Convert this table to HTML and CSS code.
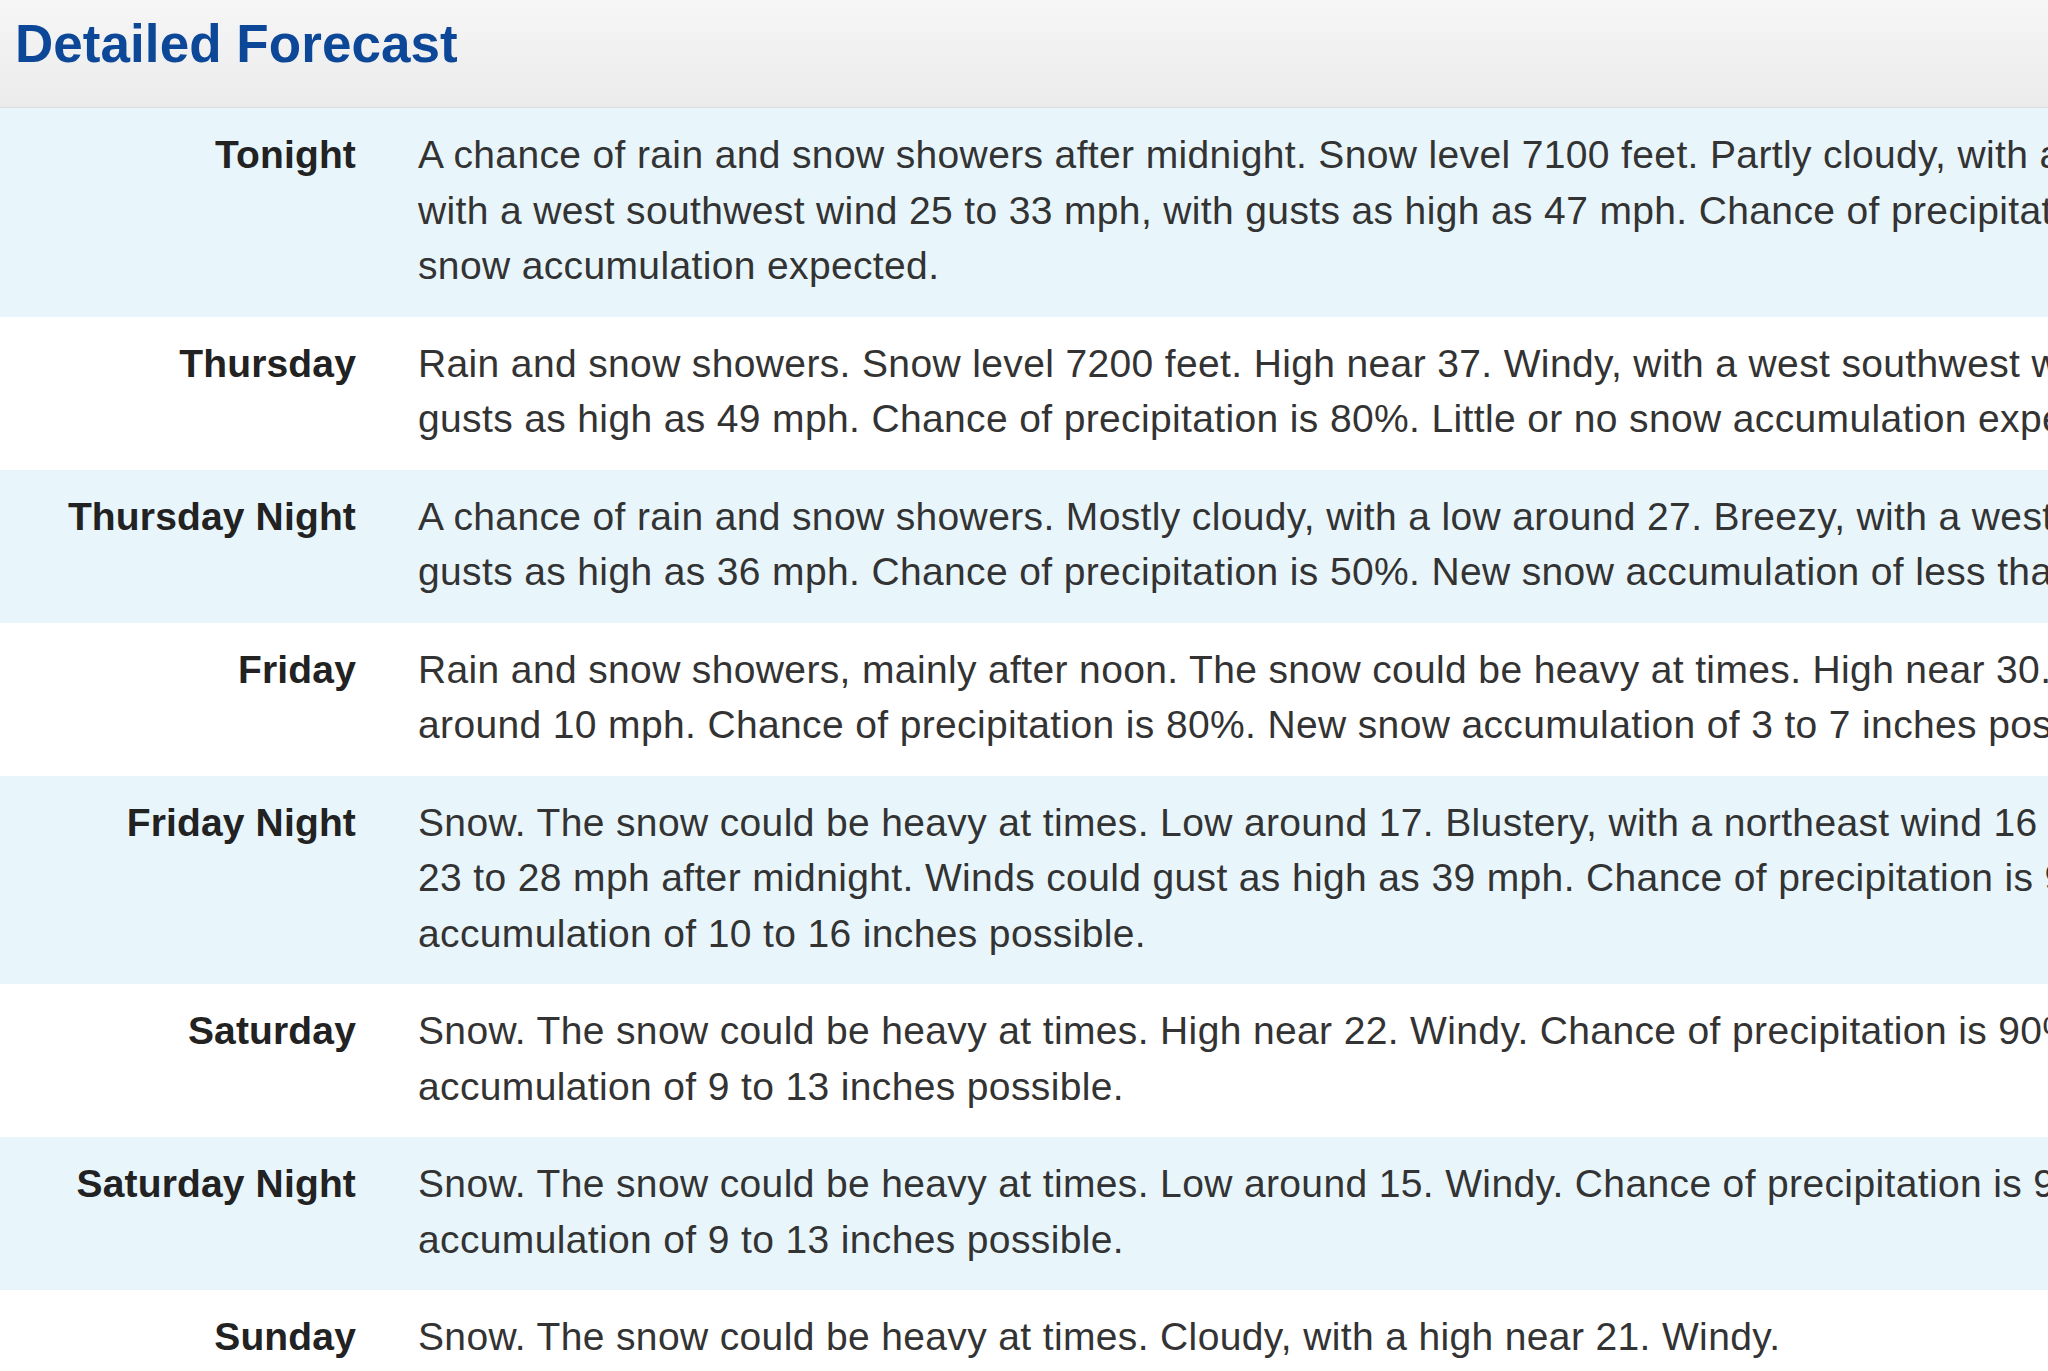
FILE: index.html
```html
<!DOCTYPE html>
<html lang="en">
<head>
<meta charset="utf-8">
<title>Detailed Forecast</title>
<link rel="stylesheet" href="styles.css">
</head>
<body>
<div class="panel">
  <div class="panel-heading">
    <h2 class="panel-title">Detailed Forecast</h2>
  </div>
  <div class="panel-body">
    <div class="row row-odd">
      <div class="forecast-label">Tonight</div>
      <div class="forecast-text">A chance of rain and snow showers after midnight. Snow level 7100 feet. Partly cloudy, with a low around 28. Windy,<br>with a west southwest wind 25 to 33 mph, with gusts as high as 47 mph. Chance of precipitation is 30%. Little or no<br>snow accumulation expected.</div>
    </div>
    <div class="row row-even">
      <div class="forecast-label">Thursday</div>
      <div class="forecast-text">Rain and snow showers. Snow level 7200 feet. High near 37. Windy, with a west southwest wind 29 to 34 mph, with<br>gusts as high as 49 mph. Chance of precipitation is 80%. Little or no snow accumulation expected.</div>
    </div>
    <div class="row row-odd">
      <div class="forecast-label">Thursday Night</div>
      <div class="forecast-text">A chance of rain and snow showers. Mostly cloudy, with a low around 27. Breezy, with a west wind 18 to 24 mph, with<br>gusts as high as 36 mph. Chance of precipitation is 50%. New snow accumulation of less than a half inch possible.</div>
    </div>
    <div class="row row-even">
      <div class="forecast-label">Friday</div>
      <div class="forecast-text">Rain and snow showers, mainly after noon. The snow could be heavy at times. High near 30. Light east wind becoming<br>around 10 mph. Chance of precipitation is 80%. New snow accumulation of 3 to 7 inches possible.</div>
    </div>
    <div class="row row-odd">
      <div class="forecast-label">Friday Night</div>
      <div class="forecast-text">Snow. The snow could be heavy at times. Low around 17. Blustery, with a northeast wind 16 to 21 mph increasing to<br>23 to 28 mph after midnight. Winds could gust as high as 39 mph. Chance of precipitation is 90%. New snow<br>accumulation of 10 to 16 inches possible.</div>
    </div>
    <div class="row row-even">
      <div class="forecast-label">Saturday</div>
      <div class="forecast-text">Snow. The snow could be heavy at times. High near 22. Windy. Chance of precipitation is 90%. New snow<br>accumulation of 9 to 13 inches possible.</div>
    </div>
    <div class="row row-odd">
      <div class="forecast-label">Saturday Night</div>
      <div class="forecast-text">Snow. The snow could be heavy at times. Low around 15. Windy. Chance of precipitation is 90%. New snow<br>accumulation of 9 to 13 inches possible.</div>
    </div>
    <div class="row row-even">
      <div class="forecast-label">Sunday</div>
      <div class="forecast-text">Snow. The snow could be heavy at times. Cloudy, with a high near 21. Windy.</div>
    </div>
  </div>
</div>
</body>
</html>
```

FILE: styles.css
```css
html, body {
  margin: 0;
  padding: 0;
  overflow: hidden;
  background: #ffffff;
}

body {
  font-family: "Liberation Sans", Arial, sans-serif;
  color: #333333;
}

.panel {
  width: 100%;
  overflow: hidden;
}

.panel-heading {
  height: 93px;
  padding: 14px 14px 0 15px;
  background: linear-gradient(to bottom, #f6f6f6 0%, #ebebeb 100%);
  border-bottom: 1px solid #dcdcdc;
}

.panel-title {
  margin: 0;
  font-size: 53px;
  line-height: 60px;
  font-weight: bold;
  letter-spacing: 0.05px;
  color: #0d4898;
}

.row {
  display: grid;
  grid-template-columns: 356px auto;
  column-gap: 62px;
  padding: 19px 0 23px;
  font-size: 39px;
  line-height: 55.5px;
}

.row-odd {
  background: #e8f6fc;
}

.row-even {
  background: #ffffff;
}

.forecast-label {
  text-align: right;
  font-weight: bold;
  letter-spacing: 0.15px;
  color: #222222;
  white-space: nowrap;
}

.forecast-text {
  white-space: nowrap;
  letter-spacing: 0.36px;
  color: #333333;
}
```
